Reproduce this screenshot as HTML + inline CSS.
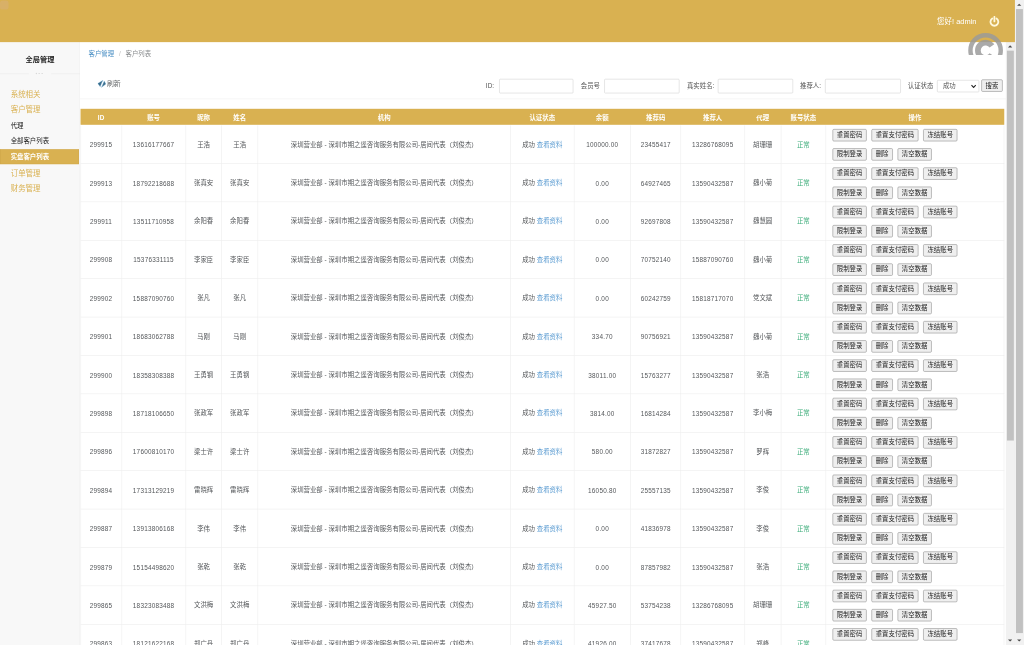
<!DOCTYPE html>
<html lang="zh-CN"><head><meta charset="utf-8"><title>客户列表</title>
<style>
*{box-sizing:border-box}
html,body{margin:0;padding:0;background:#fff;overflow:hidden}
body{width:1024px;height:645px;position:relative;font-family:"Liberation Sans","Noto Sans CJK SC",sans-serif}
#stage{position:absolute;left:0;top:0;width:1920px;height:1210px;transform:scale(.533333);transform-origin:0 0;filter:brightness(1);overflow:hidden;background:#fff;color:#54575a;font-size:12px}
#hdr{position:absolute;left:0;top:0;width:1903px;height:78.6px;background:#d9b151;z-index:2}
#hello{position:absolute;left:1757px;top:31.2px;line-height:18px;font-size:14px;color:#fff;white-space:nowrap}
#pwr{position:absolute;left:1853.5px;top:29.8px;width:21px;height:21px}
#side{position:absolute;left:0;top:78px;width:150px;height:1140px;background:#f8f8f8;border-right:1.5px solid #f0f0f0}
#side .ttl{position:absolute;left:0;top:23px;width:150px;text-align:center;font-weight:bold;font-size:13.5px;color:#222;line-height:22px}
#side .dv{position:absolute;left:0;top:59.5px;width:150px;height:1px;background:#e9e9e9}
#side .dots{position:absolute;left:54px;top:56.5px;width:42px;height:8px;background:#f8f8f8;text-align:center;font-size:9px;line-height:7px;color:#d8d8d8;letter-spacing:2px}
#menu{position:absolute;left:0;top:0;width:150px;margin:0;padding:0;list-style:none}
#menu li{position:absolute;left:0;width:150px;height:30px;line-height:30px;padding-left:20px;white-space:nowrap}
#menu li.t{font-size:14px;color:#d9b151}
#menu li.s{font-size:12px;color:#222}
#menu li.a{font-size:12px;color:#fff;font-weight:bold;background:#d9b151;width:147.5px;height:28px;line-height:28px;box-shadow:inset 0 0 0 1px #cfa648}
#main{position:absolute;left:150px;top:78px;width:1736px;height:1140px;background:#fff}
#bc{position:absolute;left:16px;top:13px;line-height:20px;font-size:12px;white-space:nowrap;color:#8a8d8f}
#bc a{color:#4a8fc4;text-decoration:none}
#bc i{font-style:normal;color:#bbb;margin:0 9px}
#rf{position:absolute;left:33px;top:70px;line-height:20px;font-size:13px;color:#676a6c;white-space:nowrap}
#rf svg{vertical-align:-2.5px;margin-right:1.5px}
#thbg{position:absolute;left:0.5px;top:126px;width:1732px;height:30px;background:#d9b151}
#ln{position:absolute;left:0;top:107px;width:1736px;height:1px;background:#eee}
.fl{position:absolute;top:70px;line-height:26px;font-size:12px;color:#555;white-space:nowrap}
.fi{position:absolute;top:70px;height:27px;border:1px solid #cfcfcf;border-radius:2px;background:#fff}
#sel{position:absolute;left:1607px;top:72px;width:79px;height:23px;border:1px solid #cfcfcf;border-radius:2px;background:#fff;font-size:12px;line-height:21px;padding-left:10px;color:#555}
#sel svg{position:absolute;right:4.5px;top:7px}
#sb{position:absolute;left:1690px;top:71px;width:40px;height:23px}
button,.b{display:inline-block;font-family:inherit;font-size:12px;line-height:20px;height:23px;padding:0 0;margin:0;border:1.5px solid #888;border-radius:2.5px;background:#efefef;color:#222;text-align:center;white-space:nowrap;vertical-align:top}
table{position:absolute;left:0.5px;top:127px;width:1732px;border-collapse:collapse;table-layout:fixed}
th{height:30px;background:transparent;color:#fff;font-weight:bold;font-size:12px;padding:0 0 1.2px;text-align:center}
td{height:71px;border:1px solid #ebebeb;border-top:none;box-sizing:border-box;padding:0;text-align:center;vertical-align:middle;font-size:12px;color:#54575a;white-space:nowrap}
td.n{letter-spacing:.4px;padding-top:2px}
td.c{padding-bottom:1.5px}
td a{color:#5a9bd1;text-decoration:none}
td.ok{color:#3fae7c}
td.op{text-align:left;padding-left:12px;vertical-align:top}
td.op div{height:36px;padding-top:6.8px}
td.op div+div{height:35px;padding-top:7px}
td.op .b{margin-right:9px}
.w1{width:64px}.w2{width:88px}.w3{width:64px}.w4{width:64px}.w5{width:40px}.w6{width:64px}
#isb{position:absolute;left:1886px;top:78px;width:17px;height:1140px;background:#f1f1f1}
#isb .th{position:absolute;left:2px;top:17px;width:13px;height:731px;background:#c1c1c1}
#osb{position:absolute;left:1903px;top:0;width:17px;height:1210px;background:#f1f1f1}
#osb .th{position:absolute;left:2px;top:17px;width:13px;height:1170px;background:#c1c1c1}
.ar{position:absolute;left:4.1px;width:0;height:0;border-left:4.4px solid transparent;border-right:4.4px solid transparent}
.au{border-bottom:4.4px solid #4a4a4a}
.ad{border-top:4.4px solid #4a4a4a}
#wm{z-index:3;position:absolute;left:1810px;top:58px;width:76px;height:45px;overflow:hidden}
</style></head>
<body>
<div id="stage">
<div id="hdr"><div style="position:absolute;left:0;top:1px;width:16px;height:17px;border-radius:5px;background:rgba(215,175,150,.33)"></div><div id="hello">您好! admin</div>
<svg id="pwr" viewBox="0 0 20 20"><path d="M6.2 4.6A7 7 0 1 0 13.8 4.6" fill="none" stroke="#fff8dc" stroke-width="3.3" stroke-linecap="round"/><path d="M10 1.6V9.6" stroke="#fff8dc" stroke-width="3.3" stroke-linecap="round"/></svg></div>
<div id="side"><div class="ttl">全局管理</div><div class="dv"></div><div class="dots">▪▪▪</div>
<ul id="menu"><li class="t" style="top:82.6px">系统相关</li><li class="t" style="top:112px">客户管理</li><li class="s" style="top:143.3px">代理</li><li class="s" style="top:171.3px">全部客户列表</li><li class="a" style="top:201.8px">实盘客户列表</li><li class="t" style="top:232.4px">订单管理</li><li class="t" style="top:260.6px">财务管理</li></ul></div>
<div id="main">
<div id="bc"><a>客户管理</a><i>/</i><span>客户列表</span></div>
<div id="rf"><svg width="16" height="14.5" viewBox="0 0 16 14.5"><path d="M0.2 6.6L10.1 0.3L7.6 5.4L4.9 12.5ZM12.4 1.7L15.6 7.5L7.1 14L9.6 8.6Z" fill="#3a6d8c" stroke="#86c0e2" stroke-width=".6" stroke-linejoin="round"/></svg>刷新</div>
<div id="ln"></div>
<span class="fl" style="left:761px">ID:</span><span class="fi" style="left:786px;width:139px"></span>
<span class="fl" style="left:939px">会员号</span><span class="fi" style="left:983px;width:141px"></span>
<span class="fl" style="left:1138px">真实姓名:</span><span class="fi" style="left:1196px;width:141px"></span>
<span class="fl" style="left:1350px">推荐人:</span><span class="fi" style="left:1397px;width:142px"></span>
<span class="fl" style="left:1552px">认证状态</span><div id="sel">成功<svg width="11" height="8" viewBox="0 0 11 8"><path d="M1.5 1.5L5.5 5.8L9.5 1.5" fill="none" stroke="#222" stroke-width="2"/></svg></div><button id="sb">搜索</button>
<div id="thbg"></div><table><colgroup><col style="width:77px"><col style="width:120px"><col style="width:67.5px"><col style="width:68px"><col style="width:474px"><col style="width:118.5px"><col style="width:106.5px"><col style="width:94px"><col style="width:119.5px"><col style="width:68px"><col style="width:84.5px"><col style="width:334px"></colgroup>
<thead><tr><th><span style="position:relative;top:2px">ID</span></th><th>账号</th><th>昵称</th><th>姓名</th><th>机构</th><th>认证状态</th><th>余额</th><th>推荐码</th><th>推荐人</th><th>代理</th><th>账号状态</th><th>操作</th></tr></thead>
<tbody>
<tr><td class="n">299915</td><td class="n">13616177667</td><td class="c">王浩</td><td class="c">王浩</td><td class="c">深圳营业部 - 深圳市期之遥咨询服务有限公司-居间代表（刘俊杰）</td><td class="c">成功 <a>查看资料</a></td><td class="n">100000.00</td><td class="n">23455417</td><td class="n">13286768095</td><td class="c">胡珊珊</td><td class="ok c">正常</td><td class="op"><div><span class="b w1">重置密码</span><span class="b w2">重置支付密码</span><span class="b w3">冻结账号</span></div><div><span class="b w4">限制登录</span><span class="b w5">删除</span><span class="b w6">清空数据</span></div></td></tr>
<tr><td class="n">299913</td><td class="n">18792218688</td><td class="c">张真安</td><td class="c">张真安</td><td class="c">深圳营业部 - 深圳市期之遥咨询服务有限公司-居间代表（刘俊杰）</td><td class="c">成功 <a>查看资料</a></td><td class="n">0.00</td><td class="n">64927465</td><td class="n">13590432587</td><td class="c">魏小菊</td><td class="ok c">正常</td><td class="op"><div><span class="b w1">重置密码</span><span class="b w2">重置支付密码</span><span class="b w3">冻结账号</span></div><div><span class="b w4">限制登录</span><span class="b w5">删除</span><span class="b w6">清空数据</span></div></td></tr>
<tr><td class="n">299911</td><td class="n">13511710958</td><td class="c">余阳春</td><td class="c">余阳春</td><td class="c">深圳营业部 - 深圳市期之遥咨询服务有限公司-居间代表（刘俊杰）</td><td class="c">成功 <a>查看资料</a></td><td class="n">0.00</td><td class="n">92697808</td><td class="n">13590432587</td><td class="c">魏慧圆</td><td class="ok c">正常</td><td class="op"><div><span class="b w1">重置密码</span><span class="b w2">重置支付密码</span><span class="b w3">冻结账号</span></div><div><span class="b w4">限制登录</span><span class="b w5">删除</span><span class="b w6">清空数据</span></div></td></tr>
<tr><td class="n">299908</td><td class="n">15376331115</td><td class="c">李家臣</td><td class="c">李家臣</td><td class="c">深圳营业部 - 深圳市期之遥咨询服务有限公司-居间代表（刘俊杰）</td><td class="c">成功 <a>查看资料</a></td><td class="n">0.00</td><td class="n">70752140</td><td class="n">15887090760</td><td class="c">魏小菊</td><td class="ok c">正常</td><td class="op"><div><span class="b w1">重置密码</span><span class="b w2">重置支付密码</span><span class="b w3">冻结账号</span></div><div><span class="b w4">限制登录</span><span class="b w5">删除</span><span class="b w6">清空数据</span></div></td></tr>
<tr><td class="n">299902</td><td class="n">15887090760</td><td class="c">张凡</td><td class="c">张凡</td><td class="c">深圳营业部 - 深圳市期之遥咨询服务有限公司-居间代表（刘俊杰）</td><td class="c">成功 <a>查看资料</a></td><td class="n">0.00</td><td class="n">60242759</td><td class="n">15818717070</td><td class="c">党文斌</td><td class="ok c">正常</td><td class="op"><div><span class="b w1">重置密码</span><span class="b w2">重置支付密码</span><span class="b w3">冻结账号</span></div><div><span class="b w4">限制登录</span><span class="b w5">删除</span><span class="b w6">清空数据</span></div></td></tr>
<tr><td class="n">299901</td><td class="n">18683062788</td><td class="c">马刚</td><td class="c">马刚</td><td class="c">深圳营业部 - 深圳市期之遥咨询服务有限公司-居间代表（刘俊杰）</td><td class="c">成功 <a>查看资料</a></td><td class="n">334.70</td><td class="n">90756921</td><td class="n">13590432587</td><td class="c">魏小菊</td><td class="ok c">正常</td><td class="op"><div><span class="b w1">重置密码</span><span class="b w2">重置支付密码</span><span class="b w3">冻结账号</span></div><div><span class="b w4">限制登录</span><span class="b w5">删除</span><span class="b w6">清空数据</span></div></td></tr>
<tr><td class="n">299900</td><td class="n">18358308388</td><td class="c">王勇钢</td><td class="c">王勇钢</td><td class="c">深圳营业部 - 深圳市期之遥咨询服务有限公司-居间代表（刘俊杰）</td><td class="c">成功 <a>查看资料</a></td><td class="n">38011.00</td><td class="n">15763277</td><td class="n">13590432587</td><td class="c">张浩</td><td class="ok c">正常</td><td class="op"><div><span class="b w1">重置密码</span><span class="b w2">重置支付密码</span><span class="b w3">冻结账号</span></div><div><span class="b w4">限制登录</span><span class="b w5">删除</span><span class="b w6">清空数据</span></div></td></tr>
<tr><td class="n">299898</td><td class="n">18718106650</td><td class="c">张政军</td><td class="c">张政军</td><td class="c">深圳营业部 - 深圳市期之遥咨询服务有限公司-居间代表（刘俊杰）</td><td class="c">成功 <a>查看资料</a></td><td class="n">3814.00</td><td class="n">16814284</td><td class="n">13590432587</td><td class="c">李小梅</td><td class="ok c">正常</td><td class="op"><div><span class="b w1">重置密码</span><span class="b w2">重置支付密码</span><span class="b w3">冻结账号</span></div><div><span class="b w4">限制登录</span><span class="b w5">删除</span><span class="b w6">清空数据</span></div></td></tr>
<tr><td class="n">299896</td><td class="n">17600810170</td><td class="c">梁士许</td><td class="c">梁士许</td><td class="c">深圳营业部 - 深圳市期之遥咨询服务有限公司-居间代表（刘俊杰）</td><td class="c">成功 <a>查看资料</a></td><td class="n">580.00</td><td class="n">31872827</td><td class="n">13590432587</td><td class="c">罗辉</td><td class="ok c">正常</td><td class="op"><div><span class="b w1">重置密码</span><span class="b w2">重置支付密码</span><span class="b w3">冻结账号</span></div><div><span class="b w4">限制登录</span><span class="b w5">删除</span><span class="b w6">清空数据</span></div></td></tr>
<tr><td class="n">299894</td><td class="n">17313129219</td><td class="c">雷晓辉</td><td class="c">雷晓辉</td><td class="c">深圳营业部 - 深圳市期之遥咨询服务有限公司-居间代表（刘俊杰）</td><td class="c">成功 <a>查看资料</a></td><td class="n">16050.80</td><td class="n">25557135</td><td class="n">13590432587</td><td class="c">李俊</td><td class="ok c">正常</td><td class="op"><div><span class="b w1">重置密码</span><span class="b w2">重置支付密码</span><span class="b w3">冻结账号</span></div><div><span class="b w4">限制登录</span><span class="b w5">删除</span><span class="b w6">清空数据</span></div></td></tr>
<tr><td class="n">299887</td><td class="n">13913806168</td><td class="c">李伟</td><td class="c">李伟</td><td class="c">深圳营业部 - 深圳市期之遥咨询服务有限公司-居间代表（刘俊杰）</td><td class="c">成功 <a>查看资料</a></td><td class="n">0.00</td><td class="n">41836978</td><td class="n">13590432587</td><td class="c">李俊</td><td class="ok c">正常</td><td class="op"><div><span class="b w1">重置密码</span><span class="b w2">重置支付密码</span><span class="b w3">冻结账号</span></div><div><span class="b w4">限制登录</span><span class="b w5">删除</span><span class="b w6">清空数据</span></div></td></tr>
<tr><td class="n">299879</td><td class="n">15154498620</td><td class="c">张乾</td><td class="c">张乾</td><td class="c">深圳营业部 - 深圳市期之遥咨询服务有限公司-居间代表（刘俊杰）</td><td class="c">成功 <a>查看资料</a></td><td class="n">0.00</td><td class="n">87857982</td><td class="n">13590432587</td><td class="c">张浩</td><td class="ok c">正常</td><td class="op"><div><span class="b w1">重置密码</span><span class="b w2">重置支付密码</span><span class="b w3">冻结账号</span></div><div><span class="b w4">限制登录</span><span class="b w5">删除</span><span class="b w6">清空数据</span></div></td></tr>
<tr><td class="n">299865</td><td class="n">18323083488</td><td class="c">文洪梅</td><td class="c">文洪梅</td><td class="c">深圳营业部 - 深圳市期之遥咨询服务有限公司-居间代表（刘俊杰）</td><td class="c">成功 <a>查看资料</a></td><td class="n">45927.50</td><td class="n">53754238</td><td class="n">13286768095</td><td class="c">胡珊珊</td><td class="ok c">正常</td><td class="op"><div><span class="b w1">重置密码</span><span class="b w2">重置支付密码</span><span class="b w3">冻结账号</span></div><div><span class="b w4">限制登录</span><span class="b w5">删除</span><span class="b w6">清空数据</span></div></td></tr>
<tr><td class="n">299863</td><td class="n">18121622168</td><td class="c">郑广丹</td><td class="c">郑广丹</td><td class="c">深圳营业部 - 深圳市期之遥咨询服务有限公司-居间代表（刘俊杰）</td><td class="c">成功 <a>查看资料</a></td><td class="n">41926.00</td><td class="n">37417678</td><td class="n">13590432587</td><td class="c">郑峰</td><td class="ok c">正常</td><td class="op"><div><span class="b w1">重置密码</span><span class="b w2">重置支付密码</span><span class="b w3">冻结账号</span></div><div><span class="b w4">限制登录</span><span class="b w5">删除</span><span class="b w6">清空数据</span></div></td></tr>
</tbody></table>
</div>
<div id="isb"><div class="ar au" style="top:7px"></div><div class="th"></div><div class="ar ad" style="top:1120.5px"></div></div>
<div id="osb"><div class="ar au" style="top:7px"></div><div class="th"></div><div class="ar ad" style="top:1198.5px"></div></div>
<svg id="wm" viewBox="0 0 76 45"><circle cx="38" cy="36.5" r="28.4" fill="none" stroke="#9a9a9a" stroke-opacity=".84" stroke-width="8.3"/><path d="M49.9 28.2A14.5 14.5 0 1 0 49.9 44.8" fill="none" stroke="#9a9a9a" stroke-opacity=".84" stroke-width="10.7"/></svg>
</div>
</body></html>
